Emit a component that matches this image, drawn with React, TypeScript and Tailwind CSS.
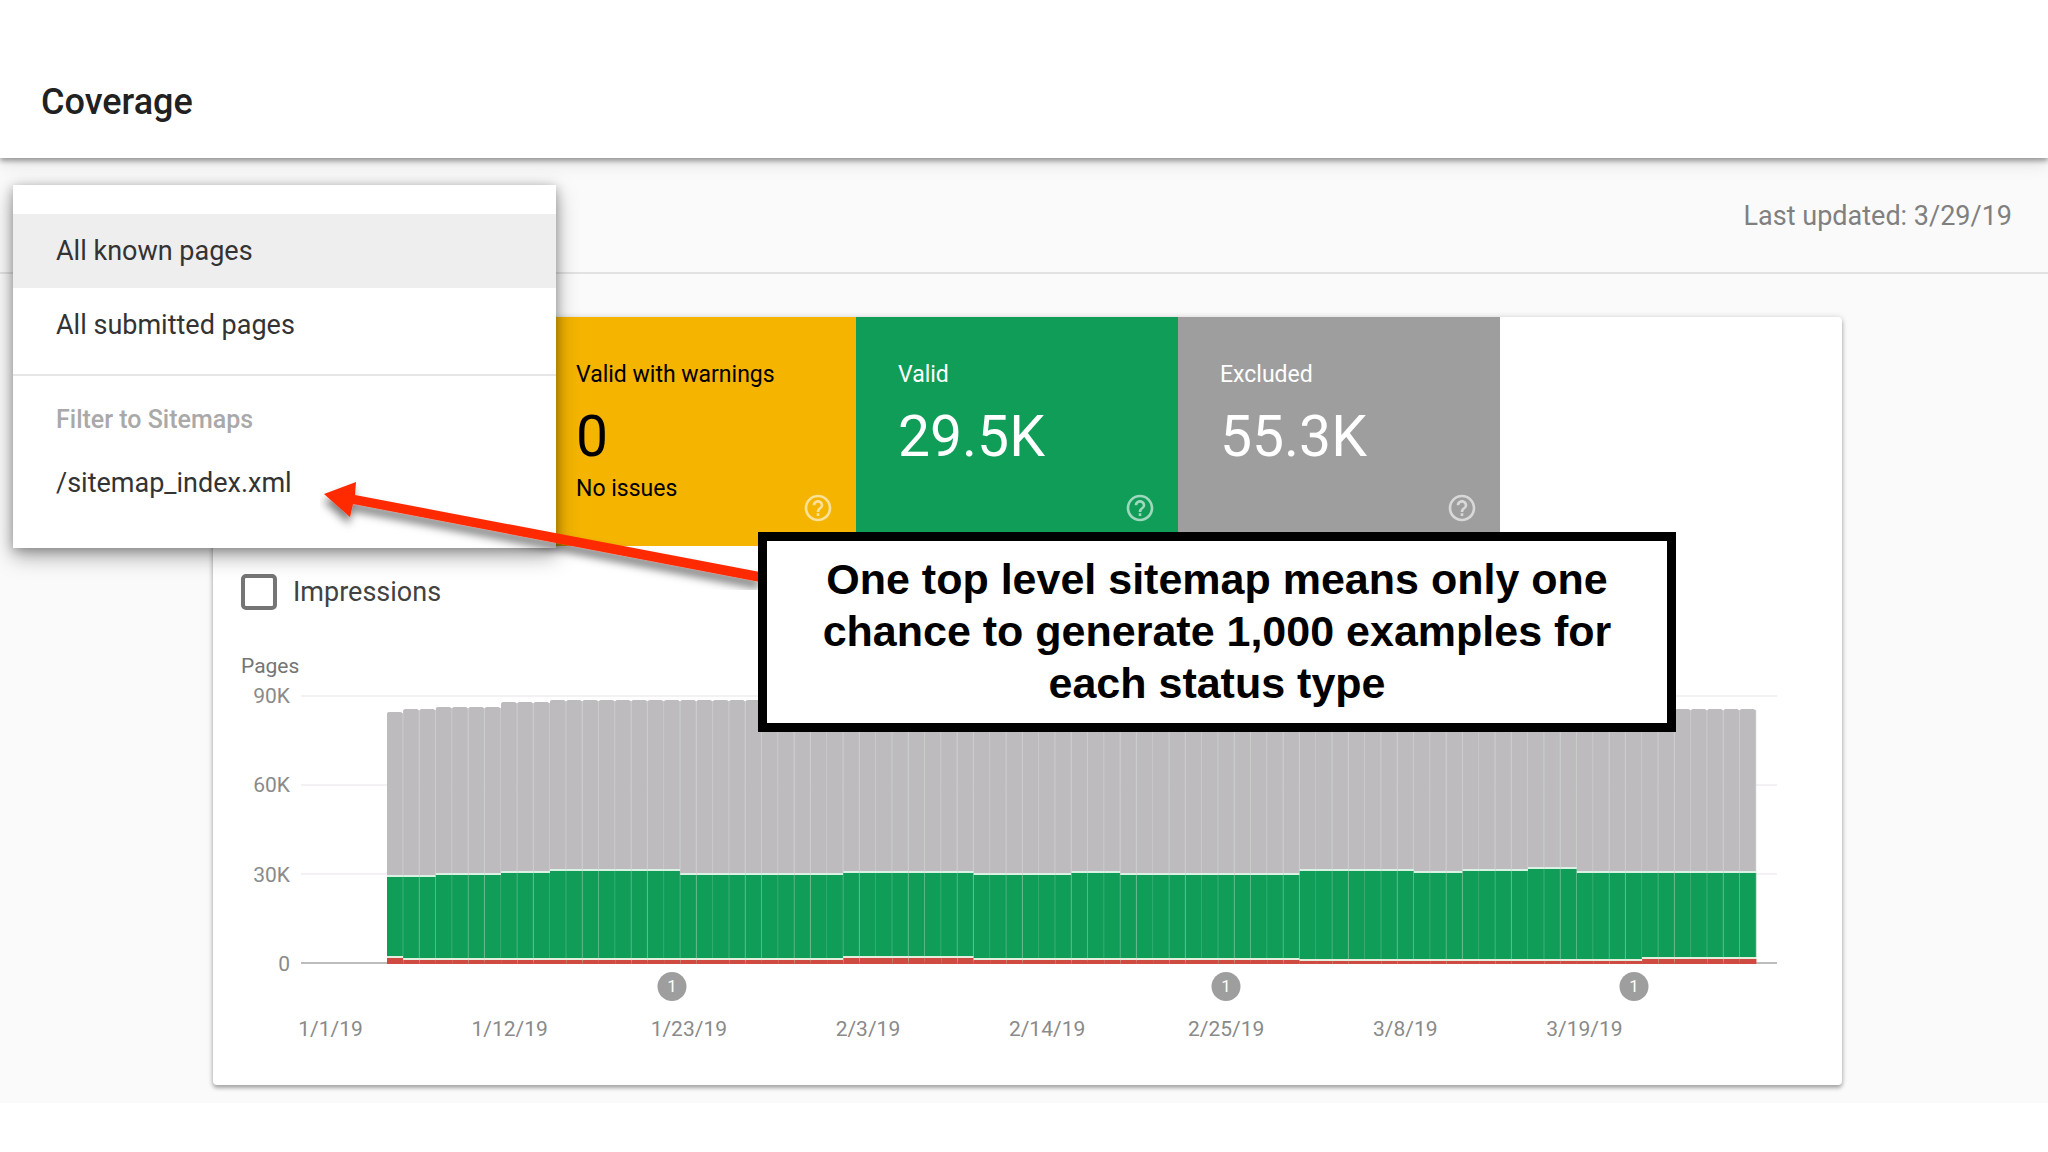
import { useState } from "react";
import { MdHelpOutline } from "react-icons/md";

const MENU_ITEMS = ["All known pages", "All submitted pages"];

const TILES = [
  { label: "Valid with warnings", value: "0", note: "No issues", style: "bg-[#f4b400] text-black" },
  { label: "Valid", value: "29.5K", note: "", style: "bg-[#0f9d58] text-white" },
  { label: "Excluded", value: "55.3K", note: "", style: "bg-[#9e9e9e] text-white" },
];

const Y_LABELS = ["90K", "60K", "30K", "0"];
const X_LABELS = ["1/1/19", "1/12/19", "1/23/19", "2/3/19", "2/14/19", "2/25/19", "3/8/19", "3/19/19"];

// Chart space: 1476 x 270, baseline at y = 268
const CHART_W = 1476;
const BASE = 268;
const FIRST_X = 86;
const STEP = 16.3;
const DAYS = 84;

// [first day, height] runs, each lasting until the next one starts
type Run = [number, number];

const TOTAL: Run[] = [[0, 251], [1, 254], [3, 256], [7, 261], [10, 263], [50, 259], [70, 254]];
const VALID: Run[] = [
  [0, 86], [3, 88], [7, 90], [10, 92], [18, 88], [28, 90], [36, 88], [42, 90],
  [45, 88], [56, 92], [63, 90], [66, 92], [70, 94], [73, 90],
];
const ERRORS: Run[] = [[0, 5], [1, 3], [28, 5], [36, 3], [56, 2], [77, 4]];

const MARKERS = [371, 925, 1333];

function valueAt(runs: Run[], day: number) {
  let value = 0;
  for (const [start, height] of runs) {
    if (day >= start) value = height;
  }
  return value;
}

function Chart() {
  return (
    <svg viewBox="0 0 1476 270" className="block w-full" aria-hidden="true">
      {[1, 90, 179].map((y) => (
        <rect key={y} x={0} y={y - 1} width={CHART_W} height={2} fill="#f3f1f3" />
      ))}
      <rect x={0} y={267} width={CHART_W} height={2} fill="#bdbdbd" />
      {Array.from({ length: DAYS }, (_, day) => {
        const x = FIRST_X + day * STEP;
        const total = valueAt(TOTAL, day);
        const valid = valueAt(VALID, day);
        const errors = valueAt(ERRORS, day);
        return (
          <g key={day}>
            <rect x={x} y={BASE - total + 1} width={STEP} height={total} fill="#c9c8ca" />
            <rect x={x} y={BASE - total} width={STEP - 1} height={total} rx={2} fill="#bdbbbd" />
            <rect x={x} y={BASE - valid - 2} width={STEP} height={valid} fill="#d9f2e4" />
            <rect x={x} y={BASE - valid} width={STEP} height={valid - errors - 2} fill="#32ab70" />
            <rect x={x} y={BASE - valid} width={STEP - 1} height={valid - errors - 2} fill="#0f9d58" />
            <rect x={x} y={BASE - errors - 2} width={STEP} height={2} fill="#e3efdc" />
            <rect x={x} y={BASE - errors} width={STEP + 0.2} height={errors + 1} fill="#cf4a40" />
          </g>
        );
      })}
    </svg>
  );
}

function FilterMenu() {
  const [selected, setSelected] = useState(MENU_ITEMS[0]);

  return (
    <div className="absolute left-[13px] top-[27px] z-20 w-[543px] bg-white pt-[29px] pb-[18px] text-[27px] leading-8 text-[#333] shadow-[0_8px_20px_rgba(0,0,0,0.35),0_2px_10px_rgba(0,0,0,0.25)]">
      {MENU_ITEMS.map((item) => (
        <button
          key={item}
          onClick={() => setSelected(item)}
          className={`block w-full px-[43px] py-[21px] text-left ${
            item === selected ? "bg-[#eeeeee]" : "bg-white"
          }`}
        >
          {item}
        </button>
      ))}
      <div className="mt-[12px] border-t-2 border-[#e6e6e6] pt-[28px]">
        <p className="px-[43px] text-[25px] font-medium text-[#a9a9a9]">Filter to Sitemaps</p>
        <button className="block w-full px-[43px] py-[31px] text-left">/sitemap_index.xml</button>
      </div>
    </div>
  );
}

function Annotation() {
  return (
    <>
      <svg
        viewBox="0 0 440 110"
        className="absolute left-[107px] top-[163px] z-30 w-[440px]"
        aria-hidden="true"
      >
        <defs>
          <filter id="arrow-shadow" x="-10%" y="-20%" width="120%" height="160%">
            <feDropShadow dx="-1" dy="7" stdDeviation="4" floodColor="#000" floodOpacity="0.5" />
          </filter>
        </defs>
        <path
          d="M4 14 L36 2 L35 15 L440 92 L440 102 L33 24 L30 37 Z"
          fill="#ff2a00"
          filter="url(#arrow-shadow)"
        />
      </svg>
      <div className="absolute left-[545px] top-[215px] z-40 w-[918px] border-[9px] border-black bg-white px-8 pt-[12px] pb-[14px] text-center font-['Liberation_Sans',sans-serif] text-[43px] leading-[52px] font-bold text-black">
        One top level sitemap means only one
        <br />
        chance to generate 1,000 examples for
        <br />
        each status type
      </div>
    </>
  );
}

export default function App() {
  const [impressions, setImpressions] = useState(false);

  return (
    <div className="min-h-screen bg-white font-[Roboto,sans-serif]">
      <header className="relative z-10 bg-white px-[41px] pt-[82px] pb-[36px] shadow-[0_3px_5px_rgba(0,0,0,0.35),0_6px_16px_rgba(0,0,0,0.1)]">
        <h1 className="text-[36px] leading-10 font-medium text-[#212121]">Coverage</h1>
      </header>

      <div className="relative bg-[#fafafa]">
        <div className="flex justify-end border-b-2 border-[#e2e2e2] px-[36px] pt-[42px] pb-[40px]">
          <p className="text-[27px] leading-8 text-[#808080]">Last updated: 3/29/19</p>
        </div>
        <FilterMenu />

        <main className="pt-[43px] pr-[206px] pb-[18px] pl-[213px]">
          <section className="relative rounded-[4px] bg-white pb-[44px] shadow-[0_3px_4px_rgba(0,0,0,0.3),0_0_6px_rgba(0,0,0,0.14)]">
            <div className="flex pl-[321px]">
              {TILES.map((tile) => (
                <div
                  key={tile.label}
                  className={`relative h-[229px] w-[322px] px-[42px] pt-[42px] ${tile.style}`}
                >
                  <p className="text-[23px] leading-8">{tile.label}</p>
                  <p className="mt-[14px] text-[57px] leading-[64px]">{tile.value}</p>
                  <p className="mt-1 text-[23px] leading-8">{tile.note}</p>
                  <button aria-label="Help" className="absolute right-[22px] bottom-[22px] text-white/60">
                    <MdHelpOutline size={32} />
                  </button>
                </div>
              ))}
            </div>

            <div className="pl-[28px]">
              <label className="mt-[28px] flex w-fit items-center gap-[16px] text-[27px] leading-9 text-[#424242]">
                <input
                  type="checkbox"
                  checked={impressions}
                  onChange={(e) => setImpressions(e.target.checked)}
                  className="size-9 appearance-none rounded-[5px] border-4 border-[#757575] bg-white checked:bg-[#757575]"
                />
                Impressions
              </label>

              <p className="mt-[44px] text-[21px] leading-6 text-[#757575]">Pages</p>

              <div className="mt-[6px] flex pr-[65px] text-[21px] leading-6 text-[#8a8a8a]">
                <div className="flex w-[49px] flex-col justify-between text-right">
                  {Y_LABELS.map((label) => (
                    <span key={label}>{label}</span>
                  ))}
                </div>
                <div className="relative ml-[11px] flex-1 py-[11px]">
                  <Chart />
                  {MARKERS.map((x) => (
                    <span
                      key={x}
                      className="absolute top-[288px] flex size-[29px] -translate-x-1/2 items-center justify-center rounded-full bg-[#9e9e9e] text-[17px] leading-none text-white"
                      style={{ left: `${(x / CHART_W) * 100}%` }}
                    >
                      1
                    </span>
                  ))}
                </div>
              </div>

              <div className="mt-[41px] flex pr-[168px] text-center text-[21px] leading-6 text-[#8a8a8a]">
                {X_LABELS.map((label) => (
                  <span key={label} className="flex-1">
                    {label}
                  </span>
                ))}
              </div>
            </div>

            <Annotation />
          </section>
        </main>
      </div>
    </div>
  );
}
